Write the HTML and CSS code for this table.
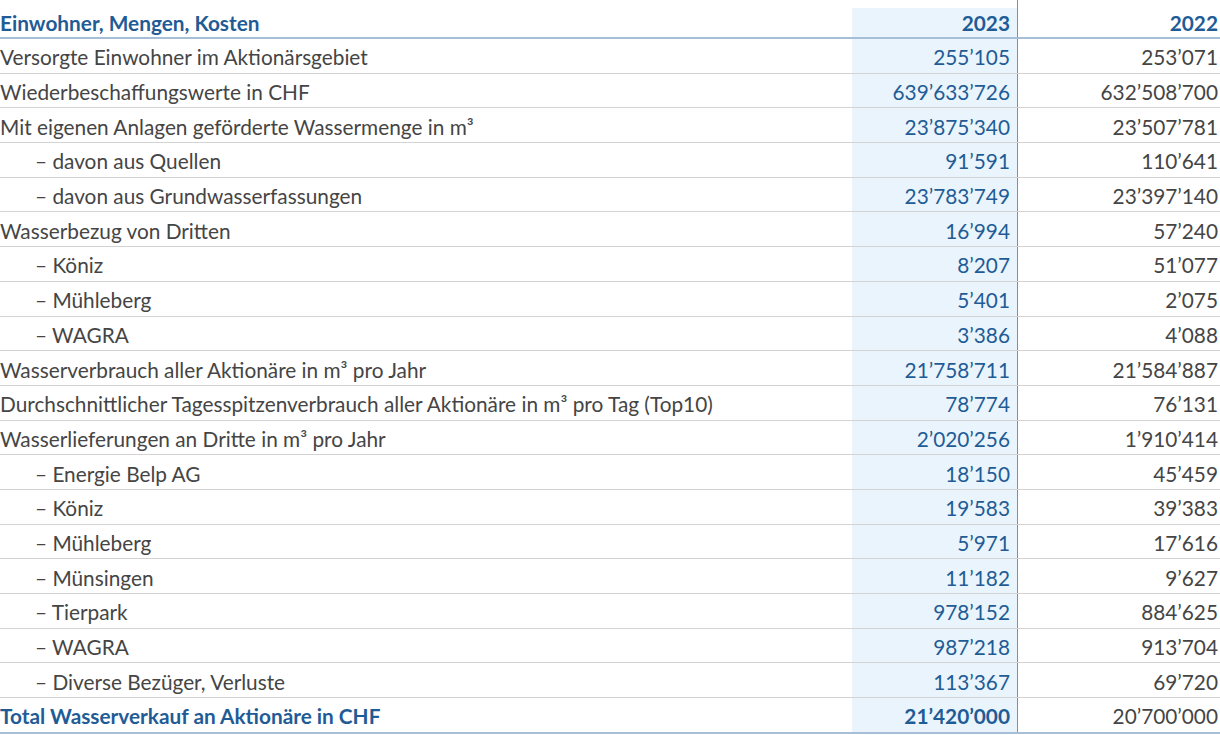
FILE: index.html
```html
<!DOCTYPE html>
<html lang="de">
<head>
<meta charset="utf-8">
<title>Einwohner, Mengen, Kosten</title>
<link rel="stylesheet" href="styles.css">
</head>
<body>
<table class="data">
  <thead>
    <tr class="head">
      <th class="label">Einwohner, Mengen, Kosten</th>
      <th class="cur">2023</th>
      <th class="prev">2022</th>
    </tr>
  </thead>
  <tbody>
    <tr><td class="label">Versorgte Einwohner im Aktionärsgebiet</td><td class="cur">255’105</td><td class="prev">253’071</td></tr>
    <tr><td class="label">Wiederbeschaffungswerte in CHF</td><td class="cur">639’633’726</td><td class="prev">632’508’700</td></tr>
    <tr><td class="label">Mit eigenen Anlagen geförderte Wassermenge in m³</td><td class="cur">23’875’340</td><td class="prev">23’507’781</td></tr>
    <tr><td class="label sub">– davon aus Quellen</td><td class="cur">91’591</td><td class="prev">110’641</td></tr>
    <tr><td class="label sub">– davon aus Grundwasserfassungen</td><td class="cur">23’783’749</td><td class="prev">23’397’140</td></tr>
    <tr><td class="label">Wasserbezug von Dritten</td><td class="cur">16’994</td><td class="prev">57’240</td></tr>
    <tr><td class="label sub">– Köniz</td><td class="cur">8’207</td><td class="prev">51’077</td></tr>
    <tr><td class="label sub">– Mühleberg</td><td class="cur">5’401</td><td class="prev">2’075</td></tr>
    <tr><td class="label sub">– WAGRA</td><td class="cur">3’386</td><td class="prev">4’088</td></tr>
    <tr><td class="label">Wasserverbrauch aller Aktionäre in m³ pro Jahr</td><td class="cur">21’758’711</td><td class="prev">21’584’887</td></tr>
    <tr><td class="label">Durchschnittlicher Tagesspitzenverbrauch aller Aktionäre in m³ pro Tag (Top10)</td><td class="cur">78’774</td><td class="prev">76’131</td></tr>
    <tr><td class="label">Wasserlieferungen an Dritte in m³ pro Jahr</td><td class="cur">2’020’256</td><td class="prev">1’910’414</td></tr>
    <tr><td class="label sub">– Energie Belp AG</td><td class="cur">18’150</td><td class="prev">45’459</td></tr>
    <tr><td class="label sub">– Köniz</td><td class="cur">19’583</td><td class="prev">39’383</td></tr>
    <tr><td class="label sub">– Mühleberg</td><td class="cur">5’971</td><td class="prev">17’616</td></tr>
    <tr><td class="label sub">– Münsingen</td><td class="cur">11’182</td><td class="prev">9’627</td></tr>
    <tr><td class="label sub">– Tierpark</td><td class="cur">978’152</td><td class="prev">884’625</td></tr>
    <tr><td class="label sub">– WAGRA</td><td class="cur">987’218</td><td class="prev">913’704</td></tr>
    <tr><td class="label sub">– Diverse Bezüger, Verluste</td><td class="cur">113’367</td><td class="prev">69’720</td></tr>
    <tr class="total"><td class="label">Total Wasserverkauf an Aktionäre in CHF</td><td class="cur">21’420’000</td><td class="prev">20’700’000</td></tr>
  </tbody>
</table>
</body>
</html>
```

FILE: styles.css
```css
html, body {
  margin: 0;
  padding: 0;
  background: #ffffff;
}

body {
  font-family: "Lato", "Open Sans", sans-serif;
  font-size: 20.8px;
  color: #454545;
}

.data {
  width: 1220px;
  border-collapse: collapse;
  table-layout: fixed;
}

.data th, .data td {
  padding: 0;
  white-space: nowrap;
  vertical-align: middle;
}

.data .label { width: 852px; text-align: left; }
.data .cur { width: 158px; padding-right: 7px; text-align: right; color: #1f5c96; background: #e9f4fc; border-right: 1.5px solid #6f93b8; }
.data .prev { width: 200px; padding-right: 2px; text-align: right; }

.head th {
  height: 29px;
  padding-top: 8px;
  line-height: 29px;
  font-weight: 700;
  color: #1f5c96;
  border-bottom: 2px solid #a6bfd7;
}

.head th.label, .head th.prev { background: #ffffff; }
.head th.cur { background: linear-gradient(#ffffff 0, #ffffff 8px, #e9f4fc 8px); }
.head th.prev { color: #1f5c96; }

.data tbody td {
  height: 31.7px;
  padding-top: 2px;
  border-bottom: 1px solid #d3d3d3;
}

.data .sub { padding-left: 35px; }

.data .total td {
  font-weight: 700;
  color: #1f5c96;
  border-bottom: 2px solid #a6bfd7;
}

.data .total td.prev { font-weight: 400; color: #454545; }
```
